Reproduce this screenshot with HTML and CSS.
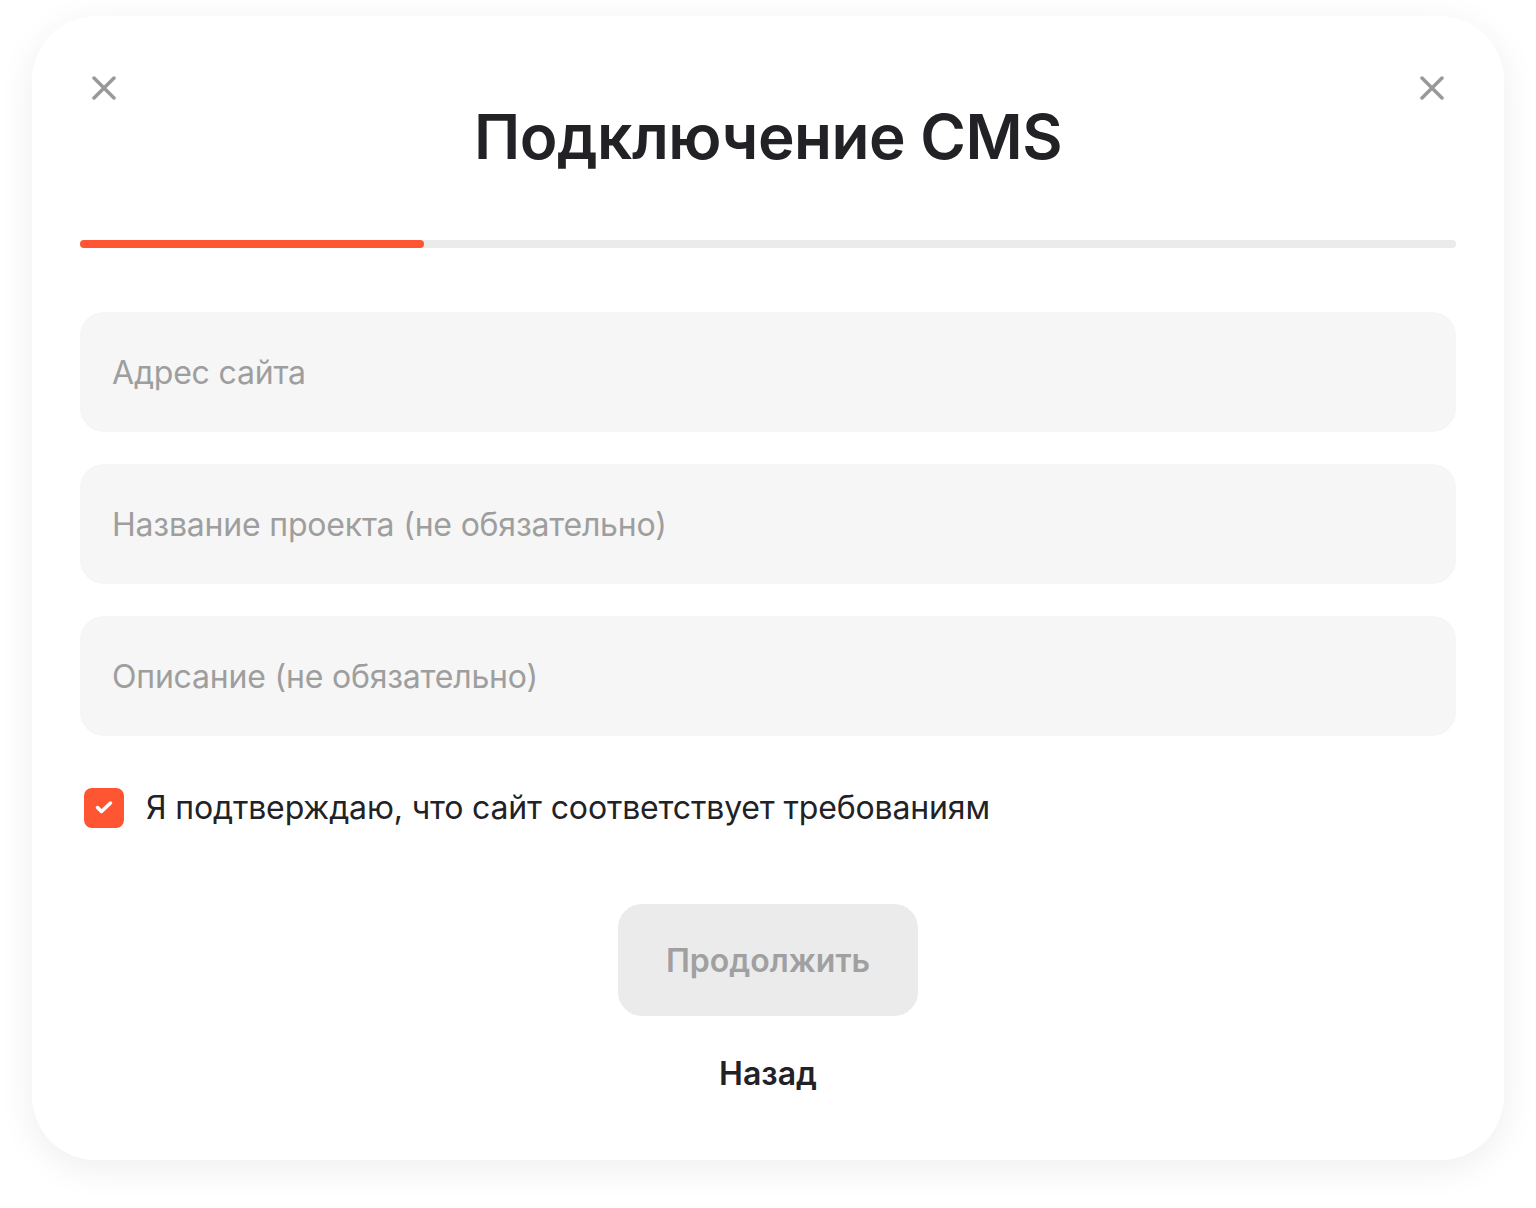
FILE: index.html
```html
<!DOCTYPE html>
<html lang="ru">
<head>
  <meta charset="UTF-8" />
  <meta name="viewport" content="width=device-width, initial-scale=1.0" />
  <title>Подключение CMS</title>
  <link rel="stylesheet" href="styles.css">
</head>
<body>

  <div class="modal">
    <div class="modal-head">
      <button class="close-btn" aria-label="Закрыть">
        <svg width="24" height="24" viewBox="0 0 24 24"><path d="M2 2L22 22M22 2L2 22" /></svg>
      </button>
      <h1>Подключение CMS</h1>
      <button class="close-btn" aria-label="Закрыть">
        <svg width="24" height="24" viewBox="0 0 24 24"><path d="M2 2L22 22M22 2L2 22" /></svg>
      </button>
    </div>

    <!-- step 1 of 4 -->
    <div class="progress">
      <div class="progress-fill" style="width: 25%;"></div>
    </div>

    <form class="cms-form">
      <input type="text" class="field" placeholder="Адрес сайта" />
      <input type="text" class="field" placeholder="Название проекта (не обязательно)" />
      <input type="text" class="field" placeholder="Описание (не обязательно)" />

      <label class="agree">
        <span class="checkbox">
          <svg width="40" height="40" viewBox="0 0 40 40"><path d="M13.5 19.5L17.5 23.5L26.5 15" /></svg>
        </span>
        Я подтверждаю, что сайт соответствует требованиям
      </label>

      <div class="actions">
        <button type="submit" class="btn-next" disabled>Продолжить</button>
        <button type="button" class="btn-back">Назад</button>
      </div>
    </form>
  </div>

</body>
</html>
```

FILE: styles.css
```css
body {
  margin: 0;
  padding: 16px 32px 48px;
  background: #fff;
  font-family: Inter, 'Noto Sans', sans-serif;
  color: #222226;
}

.modal {
  background: #fff;
  border-radius: 64px;
  box-shadow: 0 8px 36px rgba(0, 0, 0, 0.07);
  padding: 48px 48px 66px;
}

.modal-head {
  display: flex;
  align-items: flex-start;
  padding: 0 12px;
}

.modal-head h1 {
  flex: 1;
  margin: 36px 0 0;
  text-align: center;
  font-size: 62px;
  font-weight: 600;
  line-height: 1.2;
  letter-spacing: -0.5px;
}

.close-btn {
  background: none;
  border: none;
  padding: 0;
  margin-top: 12px;
  width: 24px;
  height: 24px;
  cursor: pointer;
}

.close-btn svg path {
  stroke: #999;
  stroke-width: 3.5;
  stroke-linecap: round;
  fill: none;
}

.progress {
  margin-top: 66px;
  height: 8px;
  border-radius: 4px;
  background: #ebebeb;
}

.progress-fill {
  height: 100%;
  border-radius: 4px;
  background: #ff5533;
}

.cms-form {
  display: flex;
  flex-direction: column;
  gap: 32px;
  margin-top: 64px;
}

.field {
  height: 120px;
  padding: 0 32px;
  border: none;
  border-radius: 24px;
  background: #f6f6f6;
  font-family: inherit;
  font-size: 32px;
  letter-spacing: -0.2px;
  color: #222226;
  outline: none;
}

.field::placeholder {
  color: #9e9e9e;
}

.agree {
  display: flex;
  align-items: center;
  gap: 22px;
  margin: 20px 0 0 4px;
  font-size: 32px;
  line-height: 40px;
  letter-spacing: -0.15px;
  cursor: pointer;
}

.checkbox {
  width: 40px;
  height: 40px;
  border-radius: 8px;
  background: #ff5533;
  flex-shrink: 0;
}

.checkbox svg {
  display: block;
}

.checkbox path {
  stroke: #fff;
  stroke-width: 3.5;
  stroke-linecap: round;
  stroke-linejoin: round;
  fill: none;
}

.actions {
  display: flex;
  flex-direction: column;
  align-items: center;
  margin-top: 44px;
}

.btn-next {
  width: 300px;
  height: 112px;
  border: none;
  border-radius: 24px;
  background: #ebebeb;
  color: #a0a0a0;
  font-family: inherit;
  font-size: 32px;
  font-weight: 600;
}

.btn-back {
  margin-top: 38px;
  padding: 0;
  border: none;
  background: none;
  color: #222226;
  font-family: inherit;
  font-size: 32px;
  font-weight: 600;
  line-height: 40px;
  cursor: pointer;
}
```
